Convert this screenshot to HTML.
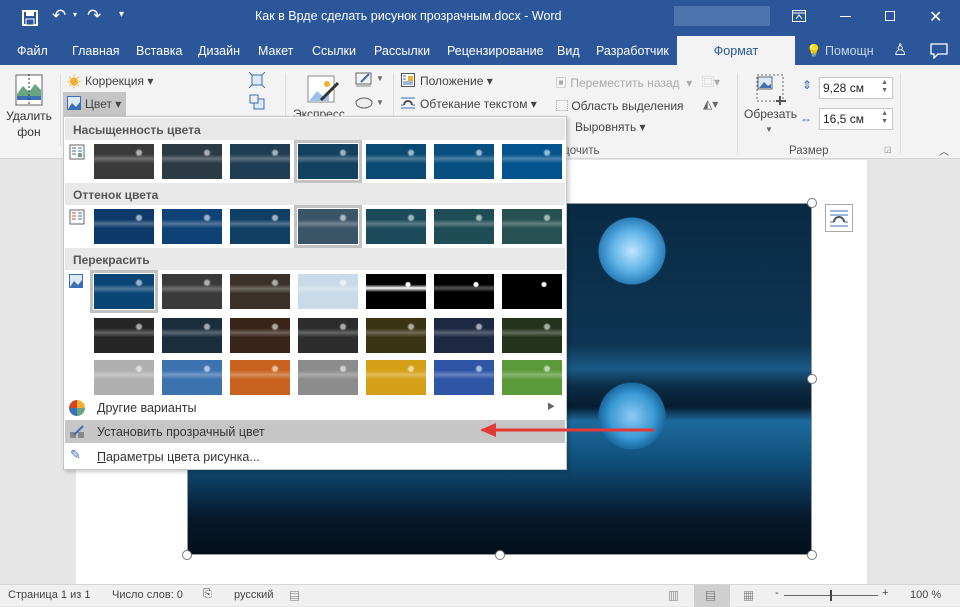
<!DOCTYPE html>
<html><head><meta charset="utf-8"><style>
*{box-sizing:border-box;margin:0;padding:0}
body{width:960px;height:606px;overflow:hidden;position:relative;font-family:"Liberation Sans","Noto Sans CJK SC",sans-serif;font-size:12px;color:#333;background:#e6e6e6}
.abs{position:absolute}
#title{left:0;top:0;width:960px;height:36px;background:#2b579a;color:#fff}
#tabs{left:0;top:36px;width:960px;height:29px;background:#2b579a;color:#fff;font-size:12.5px}
#tabs span{position:absolute;top:8px}
#ribbon{left:0;top:65px;width:960px;height:94px;background:#f3f3f3;border-bottom:1px solid #d5d5d5}
#page{left:76px;top:160px;width:791px;height:425px;background:#fff}
#status{left:0;top:584px;width:960px;height:22px;background:#f0f0f0;border-top:1px solid #d5d5d5;font-size:11px;color:#444}
#img{left:187px;top:203px;width:625px;height:352px;border:1px solid #999;background:
radial-gradient(circle at 444px 47px,#bfe6ff 0,#5fb2e8 20px,#2a7fb8 33px,transparent 34px),
radial-gradient(circle at 444px 212px,#8ccaf2 0,#3b9ad6 22px,#1b6aa3 33px,transparent 34px),
linear-gradient(180deg,#0a2a44 0,#0d3553 40%,#1a5a86 47%,#0c2c46 52%,#071d31 58%,#1c6b9e 62%,#0e4a74 75%,#06182a 90%,#03101c 100%)}
.h{width:10px;height:10px;border:1.5px solid #777;border-radius:50%;background:#fff}
#menu{left:63px;top:116px;width:504px;height:354px;background:#fff;border:1px solid #c6c6c6;box-shadow:2px 2px 4px rgba(0,0,0,.2)}
.hdr{position:absolute;left:1px;width:500px;height:22px;background:#e8e8e8;font-weight:bold;color:#555;padding:5px 0 0 8px;font-size:12px}
.t{position:absolute;width:60px;height:35px}
.sel{outline:3px solid #c2c2c2;outline-offset:1px}
.mi{position:absolute;left:1px;width:500px;height:23px;padding:5px 0 0 32px;font-size:12.5px;color:#333}
.g{color:#444;font-size:12px}
.lbl{position:absolute;top:80px;font-size:11.5px;color:#555}
.spin{position:absolute;width:74px;height:22px;background:#fff;border:1px solid #c6c6c6;font-size:12px;padding:3px 0 0 3px}
</style></head><body>
<div id="title" class="abs">
 <svg class="abs" style="left:22px;top:10px" width="16" height="16"><rect x="1" y="1" width="14" height="14" fill="none" stroke="#fff" stroke-width="2"/><rect x="4" y="1" width="8" height="5" fill="#fff"/><rect x="4" y="9" width="8" height="6" fill="#2b579a" stroke="#fff"/></svg>
 <span class="abs" style="left:52px;top:6px;font-size:17px">↶</span><span class="abs" style="left:73px;top:10px;font-size:8px">▾</span>
 <span class="abs" style="left:87px;top:6px;font-size:17px">↷</span><span class="abs" style="left:119px;top:9px;font-size:10px">▾</span>
 <span class="abs" style="left:255px;top:9px;font-size:12.5px">Как в Врде сделать рисунок прозрачным.docx - Word</span>
 <div class="abs" style="left:674px;top:6px;width:96px;height:20px;background:#5b7fb4;opacity:.7"></div>
 <svg class="abs" style="left:792px;top:10px" width="14" height="12"><rect x=".5" y=".5" width="13" height="11" fill="none" stroke="#fff"/><line x1="1" y1="3" x2="13" y2="3" stroke="#fff"/><path d="M4 9 L7 5 L10 9" fill="none" stroke="#fff"/></svg>
 <div class="abs" style="left:840px;top:16px;width:11px;height:1px;background:#fff"></div>
 <div class="abs" style="left:885px;top:11px;width:10px;height:10px;border:1px solid #fff"></div>
 <span class="abs" style="left:929px;top:7px;font-size:16px">✕</span>
</div>
<div id="tabs" class="abs">
 <span style="left:17px">Файл</span><span style="left:72px">Главная</span><span style="left:136px">Вставка</span><span style="left:198px">Дизайн</span><span style="left:258px">Макет</span><span style="left:312px">Ссылки</span><span style="left:374px">Рассылки</span><span style="left:447px">Рецензирование</span><span style="left:557px">Вид</span><span style="left:596px">Разработчик</span>
 <div class="abs" style="left:677px;top:0;width:118px;height:29px;background:#f3f3f3;color:#2b579a;text-align:center;padding-top:8px">Формат</div>
 <span style="left:806px;color:#c8d4e8">💡 Помощн</span>
 <span style="left:893px;font-size:16px;top:4px">♙</span>
 <svg class="abs" style="left:930px;top:7px" width="18" height="16"><path d="M1 1H17V11H8L4 15V11H1Z" fill="none" stroke="#fff" stroke-width="1.3"/></svg>
</div>
<div id="ribbon" class="abs">
 <svg class="abs" style="left:15px;top:9px" width="28" height="32"><rect x="1" y="1" width="26" height="30" fill="#fff" stroke="#666"/><path d="M2 20 L8 12 L14 18 L20 10 L26 16 V22 H2Z" fill="#6aa583"/><rect x="2" y="22" width="24" height="4" fill="#3c6fb3"/><line x1="14" y1="0" x2="14" y2="32" stroke="#333" stroke-dasharray="2 2"/></svg>
 <div class="abs" style="left:6px;top:43px;width:46px;text-align:center;font-size:12px;color:#333;line-height:16px">Удалить<br>фон</div>
 <div class="abs" style="left:60px;top:10px;width:1px;height:70px;background:#ddd"></div>
 <span class="abs" style="left:67px;top:7px;color:#f0b030;font-size:14px">☀</span><span class="abs g" style="left:85px;top:9px">Коррекция ▾</span>
 <div class="abs" style="left:63px;top:27px;width:63px;height:24px;background:#c5c5c5"></div>
 <svg class="abs" style="left:67px;top:31px" width="14" height="14"><rect x=".5" y=".5" width="13" height="13" fill="#dce9f6" stroke="#3c6fb3"/><path d="M1 13 L5 7 L9 11 L13 6 V13Z" fill="#3c6fb3"/></svg>
 <span class="abs g" style="left:85px;top:32px">Цвет ▾</span>
 <svg class="abs" style="left:249px;top:7px" width="16" height="16"><rect x="3" y="3" width="10" height="10" fill="#dce9f6" stroke="#3c6fb3"/><path d="M0 0L3 3M16 0L13 3M0 16L3 13M16 16L13 13" stroke="#3c6fb3"/></svg>
 <svg class="abs" style="left:249px;top:29px" width="16" height="16"><rect x="5" y="5" width="10" height="10" fill="#dce9f6" stroke="#3c6fb3"/><rect x="1" y="1" width="8" height="8" fill="#eee" stroke="#3c6fb3"/></svg>
 <div class="abs" style="left:285px;top:8px;width:1px;height:80px;background:#ddd"></div>
 <svg class="abs" style="left:307px;top:9px" width="32" height="32"><rect x="1" y="2" width="26" height="26" fill="#fff" stroke="#888"/><path d="M2 27 L10 17 L18 24 L22 20 V27Z" fill="#9fc0e8"/><circle cx="20" cy="10" r="3" fill="#f0b030"/><path d="M14 26 L31 9" stroke="#333" stroke-width="3"/></svg>
 <span class="abs g" style="left:293px;top:42px">Экспресс</span>
 <svg class="abs" style="left:355px;top:7px" width="18" height="16"><rect x="1" y="1" width="15" height="11" fill="none" stroke="#666"/><path d="M6 10 L14 2" stroke="#3c6fb3" stroke-width="2"/><rect x="1" y="13" width="15" height="2" fill="#bbb"/></svg><span class="abs" style="left:376px;top:9px;font-size:8px;color:#666">▼</span>
 <svg class="abs" style="left:355px;top:30px" width="18" height="14"><ellipse cx="9" cy="8" rx="8" ry="5" fill="#eee" stroke="#666"/></svg><span class="abs" style="left:376px;top:33px;font-size:8px;color:#666">▼</span>
 <div class="abs" style="left:393px;top:8px;width:1px;height:80px;background:#ddd"></div>
 <svg class="abs" style="left:401px;top:8px" width="14" height="14"><rect x=".5" y=".5" width="13" height="13" fill="#fff" stroke="#555"/><rect x="7" y="3" width="5" height="5" fill="#f0b030"/><path d="M2 3H5M2 6H5M2 9H12M2 11H12" stroke="#3c6fb3"/></svg>
 <span class="abs g" style="left:420px;top:9px">Положение ▾</span>
 <svg class="abs" style="left:401px;top:32px" width="14" height="12"><path d="M0 1H14M0 11H14M0 8H3M11 8H14" stroke="#3c6fb3"/><path d="M3 8 A4 4 0 0 1 11 8" fill="none" stroke="#555" stroke-width="2"/></svg>
 <span class="abs g" style="left:420px;top:32px">Обтекание текстом ▾</span>
 <span class="abs" style="left:555px;top:9px;color:#aaa">▣ Переместить назад &nbsp;▾</span>
 <span class="abs" style="left:702px;top:8px;color:#aaa">⿴▾</span>
 <span class="abs g" style="left:556px;top:32px">⬚ Область выделения</span>
 <span class="abs" style="left:703px;top:32px;color:#666">◭▾</span>
 <span class="abs g" style="left:575px;top:55px">Выровнять ▾</span>
 <span class="lbl" style="left:563px">дочить</span>
 <div class="abs" style="left:737px;top:8px;width:1px;height:80px;background:#ddd"></div>
 <svg class="abs" style="left:756px;top:9px" width="32" height="32"><rect x="1" y="1" width="26" height="26" fill="none" stroke="#666" stroke-dasharray="2 2"/><rect x="2" y="3" width="14" height="12" fill="#dce9f6" stroke="#666"/><path d="M3 14L8 8L12 12L15 10V14Z" fill="#3c6fb3"/><path d="M24 22V31M20 27H30" stroke="#555" stroke-width="2"/></svg>
 <span class="abs g" style="left:744px;top:42px">Обрезать</span><span class="abs" style="left:765px;top:60px;font-size:8px;color:#666">▼</span>
 <span class="abs" style="left:802px;top:13px;color:#3c6fb3;font-size:12px">⇕</span>
 <div class="spin" style="left:819px;top:12px;color:#222">9,28 см<span style="position:absolute;right:4px;top:1px;font-size:7px;color:#666;line-height:8px">▲<br>▼</span></div>
 <span class="abs" style="left:800px;top:47px;color:#3c6fb3;font-size:12px">⇔</span>
 <div class="spin" style="left:819px;top:43px;color:#222">16,5 см<span style="position:absolute;right:4px;top:1px;font-size:7px;color:#666;line-height:8px">▲<br>▼</span></div>
 <span class="lbl" style="left:789px">Размер</span><span class="abs" style="left:884px;top:80px;font-size:8px;color:#888">◲</span>
 <div class="abs" style="left:900px;top:8px;width:1px;height:80px;background:#ddd"></div>
 <span class="abs" style="left:939px;top:78px;font-size:10px;color:#555">︿</span>
</div>
<div id="page" class="abs"></div>
<div id="img" class="abs"></div>
<div class="abs h" style="left:807px;top:198px"></div>
<div class="abs h" style="left:807px;top:374px"></div>
<div class="abs h" style="left:807px;top:550px"></div>
<div class="abs h" style="left:495px;top:550px"></div>
<div class="abs h" style="left:182px;top:550px"></div>
<div class="abs" style="left:825px;top:204px;width:28px;height:28px;border:1px solid #aaa;background:#fff"><svg width="26" height="26"><path d="M4 6H22M4 21H22M4 17H8M18 17H22M4 10H22" stroke="#3c6fb3"/><path d="M8 17A5 5 0 0 1 18 17" fill="none" stroke="#555" stroke-width="2"/></svg></div>

<div id="menu" class="abs">
 <div class="hdr" style="top:1px">Насыщенность цвета</div>
 <div class="hdr" style="top:66px">Оттенок цвета</div>
 <div class="hdr" style="top:131px">Перекрасить</div>
 <svg class="abs" style="left:5px;top:27px" width="16" height="16"><rect x="1" y="1" width="14" height="14" fill="#fff" stroke="#666"/><path d="M3 4H7M3 7H7M3 10H7M9 4H13M9 7H13" stroke="#3c6fb3"/><rect x="9" y="9" width="4" height="4" fill="#6aa583"/></svg>
 <svg class="abs" style="left:5px;top:92px" width="16" height="16"><rect x="1" y="1" width="14" height="14" fill="#fff" stroke="#666"/><path d="M3 4H7M3 7H7M3 10H7" stroke="#d24726"/><path d="M9 4H13M9 7H13M9 10H13" stroke="#3c6fb3"/></svg>
 <svg class="abs" style="left:5px;top:157px" width="14" height="14"><rect x=".5" y=".5" width="13" height="13" fill="#dce9f6" stroke="#3c6fb3"/><path d="M1 13 L5 7 L9 11 L13 6 V13Z" fill="#3c6fb3"/></svg>
 <div id="thumbs"></div>
 <div class="mi" style="top:279px">Другие варианты<span style="position:absolute;right:10px;top:5px;font-size:8px;color:#666">▶</span></div>
 <svg class="abs" style="left:5px;top:283px" width="16" height="16"><path d="M8 8L8 0A8 8 0 0 1 16 8Z" fill="#f0b030"/><path d="M8 8L16 8A8 8 0 0 1 8 16Z" fill="#6aa583"/><path d="M8 8L8 16A8 8 0 0 1 0 8Z" fill="#3c6fb3"/><path d="M8 8L0 8A8 8 0 0 1 8 0Z" fill="#d24726"/></svg>
 <div class="mi" style="top:303px;background:#c6c6c6">Установить прозрачный цвет</div>
 <svg class="abs" style="left:5px;top:307px" width="16" height="16"><rect x="1" y="8" width="6" height="6" fill="#888"/><rect x="9" y="8" width="6" height="6" fill="#888"/><path d="M5 11L14 2" stroke="#3c6fb3" stroke-width="2"/></svg>
 <div class="mi" style="top:328px"><u>П</u>араметры цвета рисунка...</div>
 <span class="abs" style="left:6px;top:330px;font-size:13px;color:#3c6fb3">✎</span>
</div>
<svg class="abs" style="left:478px;top:420px" width="180" height="20"><path d="M4 10H176" stroke="#e53935" stroke-width="3"/><path d="M2 10L18 3V17Z" fill="#e53935"/></svg>

<div id="status" class="abs">
 <span class="abs" style="left:8px;top:4px">Страница 1 из 1</span>
 <span class="abs" style="left:112px;top:4px">Число слов: 0</span>
 <span class="abs" style="left:203px;top:3px">⎘</span>
 <span class="abs" style="left:234px;top:4px">русский</span>
 <span class="abs" style="left:289px;top:3px">▤</span>
 <span class="abs" style="left:668px;top:3px">▥</span>
 <div class="abs" style="left:694px;top:0;width:36px;height:22px;background:#cfcfcf"></div>
 <span class="abs" style="left:705px;top:3px">▤</span>
 <span class="abs" style="left:743px;top:3px">▦</span>
 <span class="abs" style="left:775px;top:2px">-</span>
 <div class="abs" style="left:784px;top:10px;width:94px;height:1px;background:#666"></div>
 <div class="abs" style="left:830px;top:5px;width:2px;height:11px;background:#444"></div>
 <span class="abs" style="left:882px;top:2px">+</span>
 <span class="abs" style="left:910px;top:4px">100 %</span>
</div>
<script>
var rows=[
["#3a3a3a","#2c3a44","#1f3e54","#12405f","#0a4a72","#064f80","#03548e"],
["#0d3a6a","#0e4276","#103f66","#3a5468","#1b4a5a","#1e4d55","#275050"],
["#0b4576","#3a3a3a","#3a322a","#c9dbe8","#000","#000","#000"],
["#262626","#1a2e3e","#3a2418","#2c2c2c","#3a3415","#1d2842","#25331c"],
["#b0b0b0","#3c72b0","#c8621e","#8c8c8c","#d4a017","#2e55a6","#5a9a3a"]];
var tops=[27,92,157,201,243],sel=[3,3,0,-1,-1],h="";
for(var r=0;r<5;r++)for(var c=0;c<7;c++){var C=rows[r][c];
var bg=(r==2&&c>=4)?"radial-gradient(circle at 70% 30%,#fff 0 2px,transparent 3px),linear-gradient(180deg,#000 30%,"+(c==4?"#fff":c==5?"#555":"#000")+" 40%,#000 52%)":"radial-gradient(circle at 75% 25%,rgba(255,255,255,.6) 0 2px,transparent 4px),linear-gradient(180deg,"+C+" 0 30%,rgba(255,255,255,.28) 42%,"+C+" 55%,"+C+" 100%)";
h+='<div class="t'+(sel[r]==c?' sel':'')+'" style="left:'+(30+c*68)+'px;top:'+tops[r]+'px;background:'+bg+';background-color:'+C+'"></div>';}
document.getElementById("thumbs").innerHTML=h;
</script>
</body></html>
